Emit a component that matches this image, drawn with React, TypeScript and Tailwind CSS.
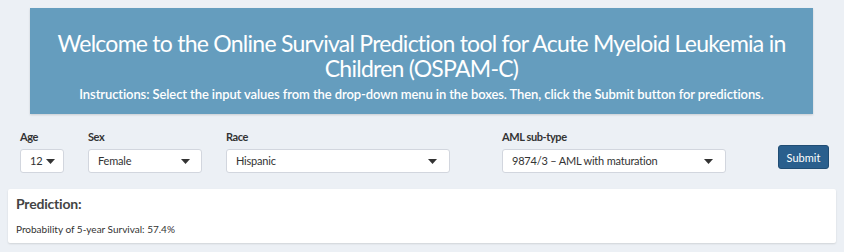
import React from "react";

const font = { fontFamily: '"Source Sans Pro", Lato, sans-serif' };

function Caret() {
  return (
    <svg width="9" height="5" viewBox="0 0 9 5" className="shrink-0">
      <path d="M0 0 L9 0 L4.5 5 Z" fill="#333" />
    </svg>
  );
}

function Select({ w, value, label, ml, pr }: { w: string; value: string; label: string; ml: string; pr: string }) {
  return (
    <div className={`flex flex-col ${ml}`}>
      <div className="text-[11px] font-bold leading-[14px] tracking-[-0.4px] text-[#333] h-[14px]">{label}</div>
      <div
        className={`${w} ${pr} mt-[5px] h-[24px] flex items-center justify-between bg-white border border-[#d2d6de] rounded-[3px] pl-[9px] text-[11px] tracking-[-0.2px] text-[#333]`}
      >
        <span>{value}</span>
        <Caret />
      </div>
    </div>
  );
}

export default function App() {
  return (
    <div className="w-[844px] h-[252px] bg-[#ecf0f5] overflow-hidden" style={font}>
      <div className="pt-[8px] pl-[30px] pr-[31px]">
        <div className="h-[106px] bg-[#659dbe] shadow-[0_1px_2px_rgba(0,0,0,0.15)] flex flex-col items-center text-white text-center pt-[23px]">
          <div className="text-[23px] leading-[25px] tracking-[-0.75px] w-[740px]">
            Welcome to the Online Survival Prediction tool for Acute Myeloid Leukemia in Children (OSPAM-C)
          </div>
          <div className="text-[13px] leading-[16px] mt-[5px] font-semibold tracking-[-0.1px]">
            Instructions: Select the input values from the drop-down menu in the boxes. Then, click the Submit button for predictions.
          </div>
        </div>
      </div>
      <div className="flex items-start pl-[20px] mt-[16px] h-[59px]">
        <Select w="w-[44px]" pr="pr-[8px]" value="12" label="Age" ml="" />
        <Select w="w-[114px]" pr="pr-[11px]" value="Female" label="Sex" ml="ml-[24px]" />
        <Select w="w-[224px]" pr="pr-[12px]" value="Hispanic" label="Race" ml="ml-[24px]" />
        <Select w="w-[224px]" pr="pr-[12px]" value="9874/3 – AML with maturation" label="AML sub-type" ml="ml-[52px]" />
        <button className="ml-[52px] mt-[15px] w-[51px] h-[24px] bg-[#2a5f8d] border border-[#204d74] rounded-[3px] text-white text-[11px] leading-none">
          Submit
        </button>
      </div>
      <div className="mx-[8px] h-[54px] bg-white rounded-[2px] shadow-[0_1px_2px_rgba(0,0,0,0.12)] px-[8px] pt-[6px]">
        <div className="text-[14px] font-bold text-[#444] leading-[18px] tracking-[-0.2px]">Prediction:</div>
        <div className="text-[10px] text-[#333] mt-[10px] leading-[13px]">Probability of 5-year Survival: 57.4%</div>
      </div>
    </div>
  );
}
